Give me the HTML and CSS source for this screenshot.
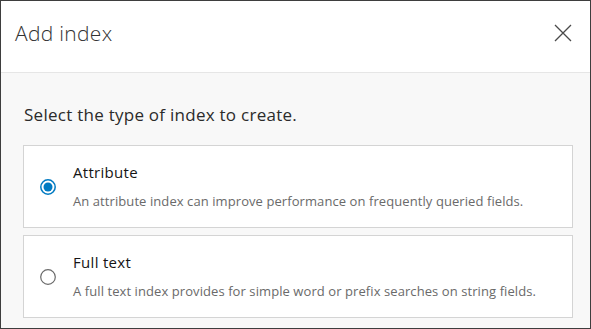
FILE: index.html
```html
<!DOCTYPE html>
<html lang="en">
<head>
<meta charset="utf-8">
<title>Add index</title>
<link rel="stylesheet" href="styles.css">
</head>
<body>
<div class="dialog">
  <header class="header">
    <h2 class="title">Add index</h2>
    <button class="close" aria-label="Close">
      <svg width="18" height="18" viewBox="0 0 18 18"><path d="M1 1 L17 17 M17 1 L1 17" stroke="#4a4a4a" stroke-width="1.3" fill="none"/></svg>
    </button>
  </header>
  <div class="content">
    <p class="prompt">Select the type of index to create.</p>
    <div class="options">
      <label class="option">
        <span class="radio checked">
          <svg width="16" height="16" viewBox="0 0 16 16"><circle cx="8" cy="8" r="7.2" fill="#fff" stroke="#007ac2" stroke-width="1.5"/><circle cx="8" cy="8" r="4.5" fill="#007ac2"/></svg>
        </span>
        <span class="text">
          <span class="opt-title">Attribute</span>
          <span class="opt-desc">An attribute index can improve performance on frequently queried fields.</span>
        </span>
      </label>
      <label class="option">
        <span class="radio">
          <svg width="16" height="16" viewBox="0 0 16 16"><circle cx="8" cy="8" r="7.3" fill="#fff" stroke="#6a6a6a" stroke-width="1.2"/></svg>
        </span>
        <span class="text">
          <span class="opt-title">Full text</span>
          <span class="opt-desc">A full text index provides for simple word or prefix searches on string fields.</span>
        </span>
      </label>
    </div>
  </div>
</div>
</body>
</html>
```
FILE: styles.css
```css
html, body {
  margin: 0;
  padding: 0;
  background: #ffffff;
}
body {
  font-family: "Open Sans", "Noto Sans", "Liberation Sans", sans-serif;
  color: #323232;
}
.dialog {
  box-sizing: border-box;
  width: 591px;
  height: 329px;
  border: 1px solid #3e3e3e;
  display: flex;
  flex-direction: column;
  background: #f8f8f8;
  overflow: hidden;
}
.header {
  flex: none;
  background: #ffffff;
  border-bottom: 1px solid #e6e6e6;
  display: flex;
  align-items: center;
  justify-content: space-between;
  padding: 0 18px 8px 14px;
  box-sizing: border-box;
  height: 72px;
}
.title {
  margin: 0;
  font-size: 21px;
  font-weight: 300;
  color: #323232;
  letter-spacing: 0.3px;
}
.close {
  border: 0;
  background: transparent;
  padding: 0;
  width: 18px;
  height: 18px;
  display: flex;
}
.content {
  flex: 1;
  padding: 0 17px 0 22px;
  display: flex;
  flex-direction: column;
}
.prompt {
  margin: 0;
  padding: 30px 0 0 1px;
  height: 72px;
  box-sizing: border-box;
  font-size: 17px;
  line-height: 24px;
  color: #2b2b2b;
  letter-spacing: 0.26px;
}
.options {
  display: flex;
  flex-direction: column;
  gap: 7px;
}
.option {
  box-sizing: border-box;
  height: 83px;
  background: #ffffff;
  border: 1px solid #d4d4d4;
  display: flex;
  align-items: center;
  padding-left: 16px;
}
.radio {
  width: 16px;
  height: 16px;
  display: flex;
  flex: none;
}
.text {
  display: flex;
  flex-direction: column;
  margin-left: 17px;
  padding-bottom: 1px;
}
.opt-title {
  font-size: 15px;
  line-height: 20px;
  color: #151515;
  letter-spacing: 0.3px;
}
.opt-desc {
  margin-top: 10px;
  font-size: 13px;
  line-height: 18px;
  color: #6a6a6a;
  letter-spacing: 0.08px;
}
```
